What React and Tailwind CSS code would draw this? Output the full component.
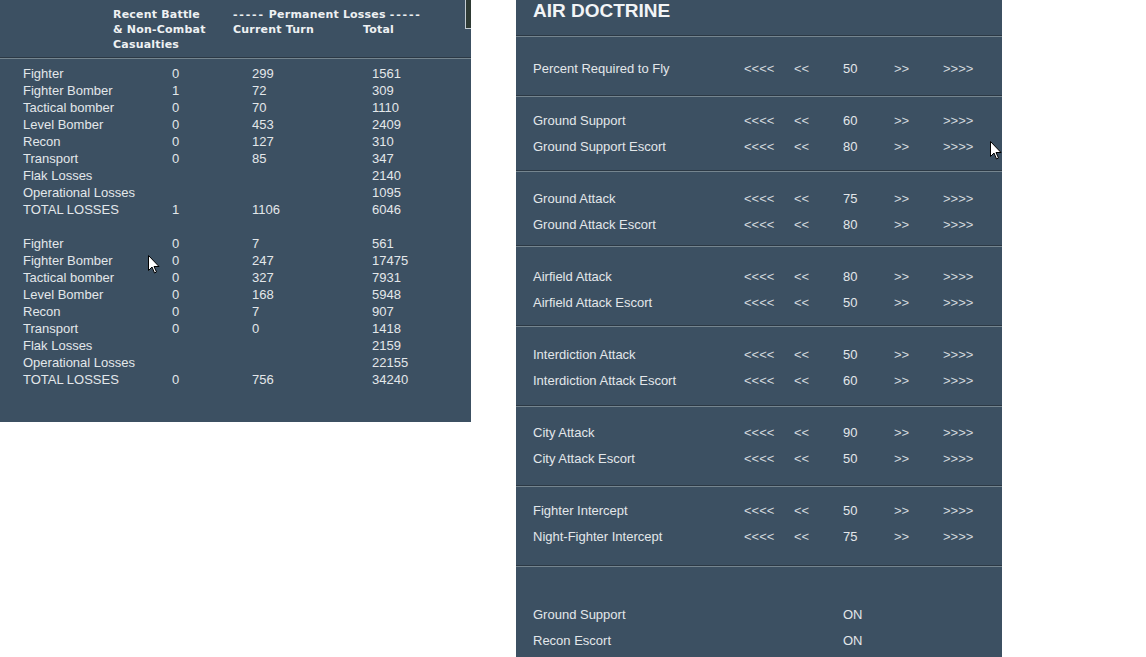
import React from 'react';

const firstBlock = [
    ['Fighter', '0', '299', '1561'],
    ['Fighter Bomber', '1', '72', '309'],
    ['Tactical bomber', '0', '70', '1110'],
    ['Level Bomber', '0', '453', '2409'],
    ['Recon', '0', '127', '310'],
    ['Transport', '0', '85', '347'],
    ['Flak Losses', '', '', '2140'],
    ['Operational Losses', '', '', '1095'],
    ['TOTAL LOSSES', '1', '1106', '6046'],
];

const secondBlock = [
    ['Fighter', '0', '7', '561'],
    ['Fighter Bomber', '0', '247', '17475'],
    ['Tactical bomber', '0', '327', '7931'],
    ['Level Bomber', '0', '168', '5948'],
    ['Recon', '0', '7', '907'],
    ['Transport', '0', '0', '1418'],
    ['Flak Losses', '', '', '2159'],
    ['Operational Losses', '', '', '22155'],
    ['TOTAL LOSSES', '0', '756', '34240'],
];

const sections = [
    { pad: 'pt-[19px] h-[58px]', rows: [['Percent Required to Fly', '50']] },
    { pad: 'pt-[11px] h-[73px]', rows: [['Ground Support', '60'], ['Ground Support Escort', '80']] },
    { pad: 'pt-[14px] h-[73px]', rows: [['Ground Attack', '75'], ['Ground Attack Escort', '80']] },
    { pad: 'pt-[17px] h-[78px]', rows: [['Airfield Attack', '80'], ['Airfield Attack Escort', '50']] },
    { pad: 'pt-[15px] h-[78px]', rows: [['Interdiction Attack', '50'], ['Interdiction Attack Escort', '60']] },
    { pad: 'pt-[13px] h-[78px]', rows: [['City Attack', '90'], ['City Attack Escort', '50']] },
    { pad: 'pt-[11px] h-[78px]', rows: [['Fighter Intercept', '50'], ['Night-Fighter Intercept', '75']] },
];

const Divider = () => (
    <div>
        <div className="h-px bg-[#2c3945]" />
        <div className="h-px bg-[#75858f]" />
    </div>
);

const Cursor = ({ className }) => (
    <svg className={className} width="12" height="19" viewBox="0 0 12 19">
        <path d="M0.5 0.5 L0.5 15.5 L4 12 L6.5 18 L8.5 17 L6 11.5 L11 11.5 Z" fill="#ffffff" stroke="#000000" strokeWidth="1" />
    </svg>
);

const LossRow = ({ row }) => (
    <div className="grid grid-cols-[149px_80px_120px_1fr] leading-[17px]">
        {row.map((c, i) => (
            <span key={i}>{c}</span>
        ))}
    </div>
);

const App = () => {
    return (
        <div className="flex items-start gap-[45px] w-[1146px] h-[657px] bg-white overflow-hidden text-[#e3e7ea] font-['Liberation_Sans',Arial,sans-serif]">
            {/* Losses panel */}
            <div className="relative w-[471px] h-[422px] bg-[#3c5062] shrink-0">
                <div className="absolute right-0 top-0 w-[6px] h-[29px] bg-[#2e3a34] border-l border-b border-[#c3cbd2]" />
                <div className="flex pl-[113px] pt-[7px] h-[57px] font-['DejaVu_Sans',Verdana,sans-serif] font-bold text-[11px] leading-[15px] tracking-[0.2px] text-[#eef1f3]">
                    <div className="w-[120px]">
                        <div>Recent Battle</div>
                        <div>&amp; Non-Combat</div>
                        <div>Casualties</div>
                    </div>
                    <div>
                        <div>
                            <span className="tracking-[1.8px]">-----</span> Permanent Losses <span className="tracking-[1.8px]">-----</span>
                        </div>
                        <div className="flex">
                            <span className="w-[130px]">Current Turn</span>
                            <span>Total</span>
                        </div>
                    </div>
                </div>
                <Divider />
                <div className="pl-[23px] pt-[6px] text-[13px]">
                    {firstBlock.map((r, i) => (
                        <LossRow key={i} row={r} />
                    ))}
                    <div className="h-[17px]" />
                    {secondBlock.map((r, i) => (
                        <LossRow key={i} row={r} />
                    ))}
                </div>
                <Cursor className="absolute left-[148px] top-[255px]" />
            </div>

            {/* Air doctrine panel */}
            <div className="relative w-[486px] h-[657px] bg-[#3c5062] shrink-0 overflow-hidden">
                <div className="h-[35px] pl-[17px] text-[19px] font-bold leading-[22px] text-[#f2f4f6]">
                    AIR DOCTRINE
                </div>
                <Divider />
                {sections.map((s, i) => (
                    <div key={i}>
                        <div className={`${s.pad} pl-[17px] text-[13px]`}>
                            {s.rows.map(([label, val]) => (
                                <div key={label} className="grid grid-cols-[211px_50px_49px_51px_49px_1fr] leading-[26px]">
                                    <span>{label}</span>
                                    <span className="text-[#d3d9de]">&lt;&lt;&lt;&lt;</span>
                                    <span className="text-[#d3d9de]">&lt;&lt;</span>
                                    <span>{val}</span>
                                    <span className="text-[#d3d9de]">&gt;&gt;</span>
                                    <span className="text-[#d3d9de]">&gt;&gt;&gt;&gt;</span>
                                </div>
                            ))}
                        </div>
                        <Divider />
                    </div>
                ))}
                <div className="pt-[35px] pl-[17px] text-[13px]">
                    {[['Ground Support', 'ON'], ['Recon Escort', 'ON']].map(([label, val]) => (
                        <div key={label} className="grid grid-cols-[310px_1fr] leading-[26px]">
                            <span>{label}</span>
                            <span>{val}</span>
                        </div>
                    ))}
                </div>
                <Cursor className="absolute left-[474px] top-[141px]" />
            </div>
        </div>
    );
};

export default App;
